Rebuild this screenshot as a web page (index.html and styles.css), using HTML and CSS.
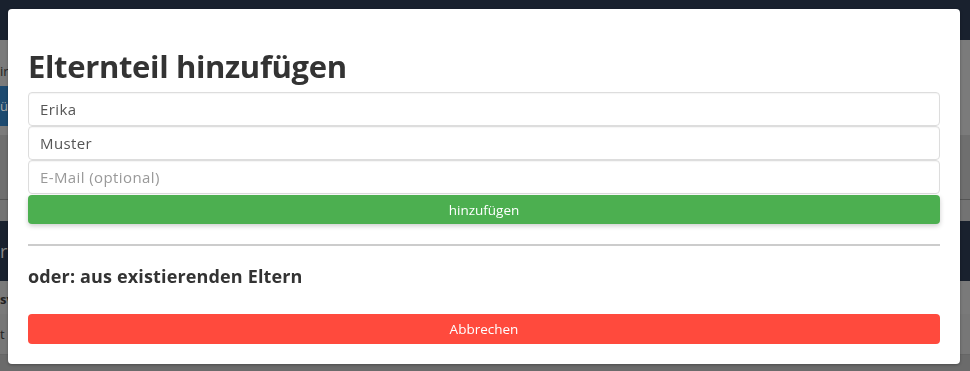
FILE: index.html
```html
<!DOCTYPE html>
<html>
<head>
  <meta charset="UTF-8">
  <link rel="stylesheet" href="styles.css">
  <title>Elternteil hinzufügen</title>
</head>
<body>
<div class="page">
  <div class="navbar"></div>
  <div class="band band-top">
    <div class="band-text">ir</div>
    <div class="band-button">ü</div>
  </div>
  <div class="band band-mid"></div>
  <div class="band band-thin"></div>
  <div class="band band-dark">r</div>
  <div class="band band-row"><b>sv</b></div>
  <div class="band band-row2">t</div>
  <div class="band band-end"></div>
</div>

<div class="modal">
  <h2 class="modal-title">Elternteil hinzufügen</h2>
  <input class="field" type="text" value="Erika">
  <input class="field" type="text" value="Muster">
  <input class="field" type="text" placeholder="E-Mail (optional)">
  <button class="btn btn-add">hinzufügen</button>
  <hr class="divider">
  <h4 class="sub-title">oder: aus existierenden Eltern</h4>
  <button class="btn btn-cancel">Abbrechen</button>
</div>
</body>
</html>
```

FILE: styles.css
```css
body {
  margin: 0;
  font-family: "Open Sans", sans-serif;
  background-color: #6b6b6b;
  overflow: hidden;
}

.page {
  display: flex;
  flex-direction: column;
  height: 371px;
}
.navbar {
  height: 40px;
  background-color: #19212e;
  flex-shrink: 0;
}
.band {
  flex-shrink: 0;
  color: #222;
  font-size: 13px;
  padding-left: 0;
}
.band-top {
  height: 95px;
  background-color: #7b7b7b;
  display: flex;
  flex-direction: column;
  gap: 6px;
}
.band-text {
  margin-top: 22px;
  height: 18px;
}
.band-button {
  height: 40px;
  width: 40px;
  background-color: #1d4a70;
  color: #aaa;
  line-height: 40px;
}
.band-mid {
  height: 64px;
  background-color: #6f6f6f;
  border-bottom: 1px solid #555;
}
.band-thin {
  height: 21px;
  background-color: #737373;
}
.band-dark {
  height: 60px;
  background-color: #19212e;
  color: #888;
  font-size: 18px;
  line-height: 60px;
}
.band-row {
  height: 33px;
  background-color: #7a7a7a;
  line-height: 36px;
}
.band-row2 {
  height: 40px;
  background-color: #777;
  line-height: 40px;
  border-bottom: 1px solid #666;
}
.band-end {
  height: 20px;
  background-color: #6b6b6b;
}

.modal {
  position: fixed;
  left: 8px;
  top: 9px;
  width: 912px;
  padding: 0 20px 20px 20px;
  background-color: #fff;
  border-radius: 4px;
  box-shadow: 0 1px 3px rgba(0,0,0,0.3);
  display: flex;
  flex-direction: column;
}
.modal-title {
  margin: 37px 0 6px 0;
  font-size: 31px;
  line-height: 40px;
  letter-spacing: -0.35px;
  font-weight: 700;
  color: #333;
}
.field {
  height: 34px;
  box-sizing: border-box;
  border: 1px solid #ddd;
  border-radius: 4px;
  padding: 0 11px;
  font-family: "Open Sans", sans-serif;
  font-size: 15px;
  letter-spacing: 0.4px;
  color: #555;
  outline: none;
  box-shadow: inset 0 1px 1px rgba(0,0,0,0.04);
}
.field::placeholder {
  color: #999;
}
.btn {
  height: 30px;
  border: none;
  border-radius: 4px;
  color: #fff;
  font-family: "Open Sans", sans-serif;
  font-size: 13.5px;
  cursor: pointer;
}
.btn-add {
  margin-top: 1px;
  height: 29px;
  background-color: #4caf50;
  box-shadow: 0 2px 5px rgba(0,0,0,0.2);
}
.btn-cancel {
  background-color: #ff4a3d;
}
.divider {
  width: 100%;
  margin: 20px 0 0 0;
  border: none;
  border-top: 2px solid #ccc;
}
.sub-title {
  margin: 19px 0 27px 0;
  font-size: 18px;
  line-height: 22px;
  letter-spacing: 0.15px;
  font-weight: 700;
  color: #333;
}
```
